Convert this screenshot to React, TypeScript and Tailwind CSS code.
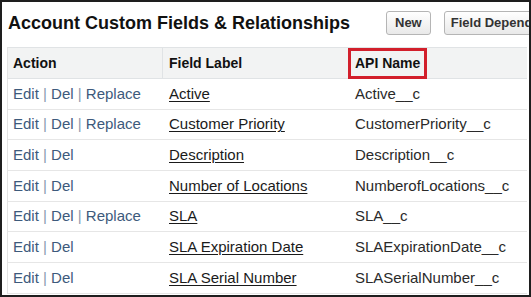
const rows = [
  { actions: ["Edit", "Del", "Replace"], label: "Active", api: "Active__c" },
  { actions: ["Edit", "Del", "Replace"], label: "Customer Priority", api: "CustomerPriority__c" },
  { actions: ["Edit", "Del"], label: "Description", api: "Description__c" },
  { actions: ["Edit", "Del"], label: "Number of Locations", api: "NumberofLocations__c" },
  { actions: ["Edit", "Del", "Replace"], label: "SLA", api: "SLA__c" },
  { actions: ["Edit", "Del"], label: "SLA Expiration Date", api: "SLAExpirationDate__c" },
  { actions: ["Edit", "Del"], label: "SLA Serial Number", api: "SLASerialNumber__c" },
];

export default function App() {
  return (
    <div
      className="w-[531px] h-[297px] overflow-hidden border-2 border-[#1e1e1e] bg-white"
      style={{ fontFamily: '"Liberation Sans", Arial, sans-serif' }}
    >
      {/* title bar */}
      <div className="flex h-[45px] items-center whitespace-nowrap pb-[3px]">
        <h2 className="w-[384px] shrink-0 pl-[6px] text-[18px] font-bold text-[#111]">
          Account Custom Fields &amp; Relationships
        </h2>
        <button className="h-[24px] shrink-0 rounded-[3px] border border-[#b5b5b5] bg-gradient-to-b from-white to-[#e9e9e9] px-[8px] text-[13px] font-bold text-[#333]">
          New
        </button>
        <button className="ml-[13px] h-[24px] shrink-0 rounded-[3px] border border-[#b5b5b5] bg-gradient-to-b from-white to-[#e9e9e9] px-[6px] text-[13px] font-bold text-[#333]">
          Field Dependencies
        </button>
      </div>

      {/* table */}
      <div className="ml-[5px] w-[520px] border-l border-[#e3e3e3]">
        <div className="flex h-[32px] items-center border-y border-[#e0e3e5] bg-[#f2f3f3] text-[14px] font-bold text-[#111]">
          <div className="flex h-full w-[155px] items-center border-r border-[#e0e3e5] pl-[5px]">Action</div>
          <div className="flex h-full w-[176px] items-center pl-[6px]">Field Label</div>
          <div className="flex h-full flex-1 items-center pl-[9px]">
            <span className="flex h-[31px] items-center border-[3px] border-[#d21f2b] px-[4px]">API Name</span>
          </div>
        </div>
        {rows.map((r) => (
          <div
            key={r.api}
            className="flex h-[30.7px] items-center border-b border-[#e6e6e6] text-[15px] whitespace-nowrap"
          >
            <div className="w-[155px] pl-[5px] text-[#3d5a7c]">
              {r.actions.map((a, i) => (
                <span key={a}>
                  {i > 0 && <span className="text-[#8a9bb0]"> | </span>}
                  {a}
                </span>
              ))}
            </div>
            <div className="w-[176px] pl-[6px] text-[#1a1a1a] underline underline-offset-2">{r.label}</div>
            <div className="flex-1 pl-[16px] text-[#2a2a2a]">{r.api}</div>
          </div>
        ))}
      </div>
    </div>
  );
}
